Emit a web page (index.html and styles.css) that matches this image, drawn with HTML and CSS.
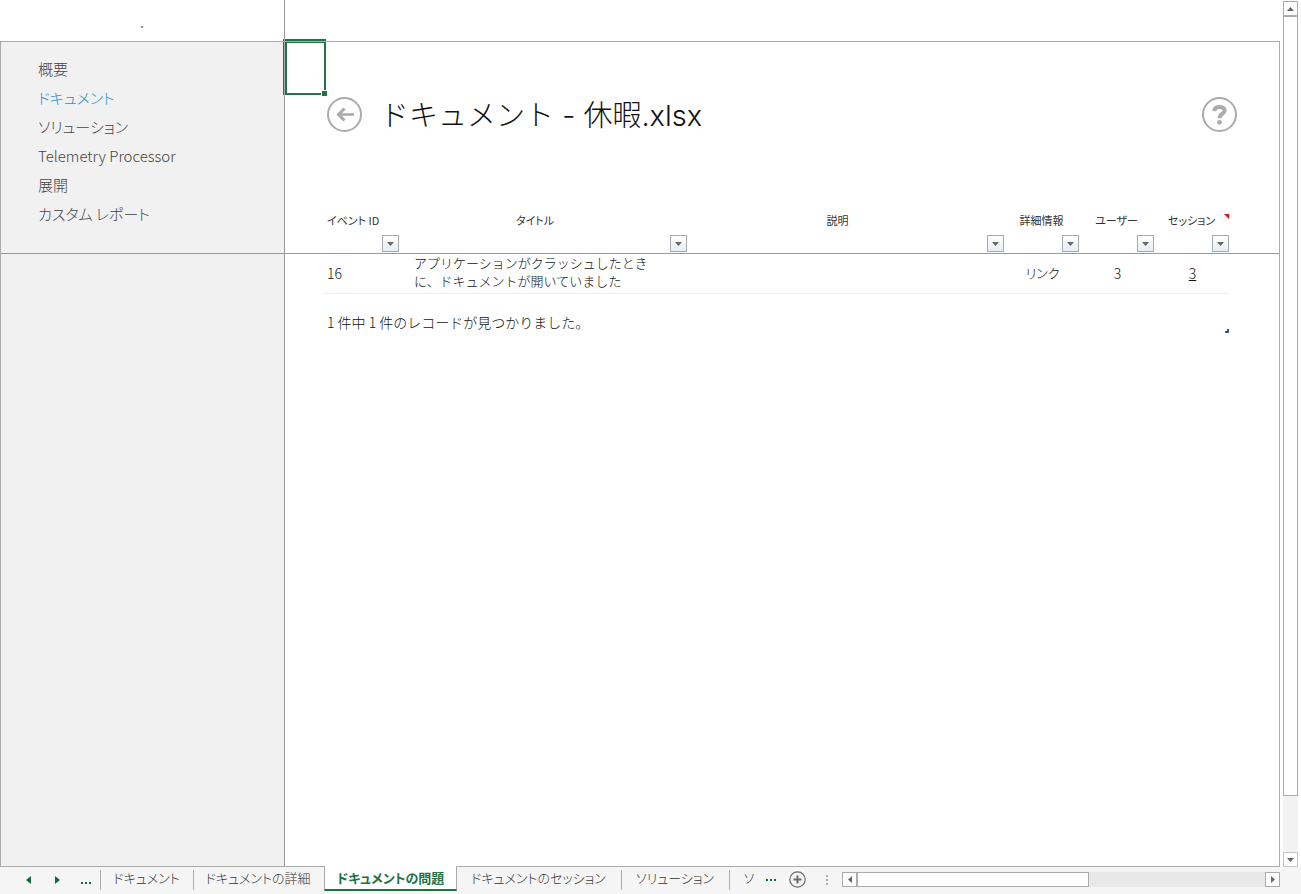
FILE: index.html
```html
<!DOCTYPE html>
<html lang="ja">
<head>
<meta charset="utf-8">
<title>ドキュメント - 休暇.xlsx</title>
<link rel="stylesheet" href="styles.css">
</head>
<body>
<div class="app">
  <div class="work">
    <div class="sheet">
      <div class="sheet-top"><div class="sheet-corner">.</div></div>
      <div class="panes">
        <aside class="sidebar">
          <nav class="nav">
            <a class="nav-link" href="#overview">概要</a>
            <a class="nav-link nav-current" href="#documents">ドキュメント</a>
            <a class="nav-link" href="#solutions">ソリューション</a>
            <a class="nav-link" href="#processor">Telemetry Processor</a>
            <a class="nav-link" href="#deploy">展開</a>
            <a class="nav-link" href="#reports">カスタム レポート</a>
          </nav>
        </aside>
        <main class="main">
          <svg class="selection" width="45" height="58" viewBox="0 0 45 58" shape-rendering="crispEdges" aria-hidden="true">
            <path fill="#217346" d="M0 0h43v51h-2V4H4v50h34v2H0z"/>
            <path fill="#217346" d="M39 52h5v5h-5z"/>
            <path fill="#ababab" d="M0 2h43v1H0zM1 0h1v56H1z"/>
          </svg>
          <header class="title-bar">
            <button class="round" type="button" aria-label="戻る">
              <svg width="35" height="35" viewBox="0 0 35 35" fill="none" stroke="#ababab">
                <circle cx="17.500" cy="17.500" r="16.500" stroke-width="2"/>
                <path d="M11 17.500h16" stroke-width="2.600"/>
                <path d="M17.500 11.500l-6 6 6 6" stroke-width="3"/>
              </svg>
            </button>
            <h1 class="title">ドキュメント - 休暇.xlsx</h1>
            <button class="round" type="button" aria-label="ヘルプ">
              <svg width="35" height="35" viewBox="0 0 35 35" fill="none" stroke="#ababab">
                <circle cx="17.500" cy="17.500" r="16.500" stroke-width="2"/>
                <path d="M12.300 14.200c.2-3 2.200-4.300 5-4.300 3.200 0 5.300 1.300 5.300 3.600 0 3.600-5 3.300-5 7.700" stroke-width="4"/>
                <circle cx="17.500" cy="25.300" r="2.400" fill="#ababab" stroke="none"/>
              </svg>
            </button>
          </header>
          <table class="grid">
            <colgroup>
              <col class="c-lead"><col class="c-id"><col class="c-name"><col class="c-desc">
              <col class="c-small"><col class="c-small"><col class="c-small"><col class="c-tail">
            </colgroup>
            <thead>
              <tr>
                <td></td>
                <th class="left" scope="col">イベント ID<button class="filter" type="button" aria-label="イベント ID のフィルター"><svg width="7" height="4" viewBox="0 0 7 4"><path d="M0 0h7L3.500 4z"/></svg></button></th>
                <th class="wide" scope="col">タイトル<button class="filter" type="button" aria-label="タイトルのフィルター"><svg width="7" height="4" viewBox="0 0 7 4"><path d="M0 0h7L3.500 4z"/></svg></button></th>
                <th class="wide" scope="col">説明<button class="filter" type="button" aria-label="説明のフィルター"><svg width="7" height="4" viewBox="0 0 7 4"><path d="M0 0h7L3.500 4z"/></svg></button></th>
                <th scope="col">詳細情報<button class="filter" type="button" aria-label="詳細情報のフィルター"><svg width="7" height="4" viewBox="0 0 7 4"><path d="M0 0h7L3.500 4z"/></svg></button></th>
                <th scope="col">ユーザー<button class="filter" type="button" aria-label="ユーザーのフィルター"><svg width="7" height="4" viewBox="0 0 7 4"><path d="M0 0h7L3.500 4z"/></svg></button></th>
                <th class="noted" scope="col">セッション<button class="filter" type="button" aria-label="セッションのフィルター"><svg width="7" height="4" viewBox="0 0 7 4"><path d="M0 0h7L3.500 4z"/></svg></button></th>
                <td></td>
              </tr>
            </thead>
            <tbody>
              <tr>
                <td></td>
                <td class="cell num left">16</td>
                <td class="cell name">アプリケーションがクラッシュしたときに、ドキュメントが開いていました</td>
                <td class="cell"></td>
                <td class="cell"><a class="plain" href="#link">リンク</a></td>
                <td class="cell num">3</td>
                <td class="cell num"><a class="count" href="#sessions">3</a></td>
                <td></td>
              </tr>
            </tbody>
            <tfoot>
              <tr>
                <td></td>
                <td class="summary" colspan="6">1 件中 1 件のレコードが見つかりました。</td>
                <td></td>
              </tr>
            </tfoot>
          </table>
        </main>
      </div>
    </div>
    <div class="vscroll">
      <button class="arrow" type="button" aria-label="上へ"><svg width="7" height="4" viewBox="0 0 7 4"><path d="M0 4h7L3.500 0z"/></svg></button>
      <div class="vthumb"></div>
      <div class="vtrack"></div>
      <button class="arrow arrow-pale" type="button" aria-label="下へ"><svg width="7" height="4" viewBox="0 0 7 4"><path d="M0 0h7L3.500 4z"/></svg></button>
    </div>
  </div>
  <footer class="bar">
    <div class="tab-nav">
      <button class="ghost" type="button" aria-label="前のシート"><svg width="5" height="8" viewBox="0 0 5 8"><path d="M5 0v8L0 4z"/></svg></button>
      <button class="ghost" type="button" aria-label="次のシート"><svg width="5" height="8" viewBox="0 0 5 8"><path d="M0 0v8l5-4z"/></svg></button>
      <button class="ghost ghost-low" type="button" aria-label="シート一覧"><svg width="10" height="2" viewBox="0 0 10 2"><path d="M0 0h2v2H0zM4 0h2v2H4zM8 0h2v2H8z"/></svg></button>
    </div>
    <button class="tab tab-s" type="button">ドキュメント</button>
    <button class="tab tab-m" type="button">ドキュメントの詳細</button>
    <button class="tab tab-m tab-on" type="button">ドキュメントの問題</button>
    <button class="tab tab-l" type="button">ドキュメントのセッション</button>
    <button class="tab tab-r" type="button">ソリューション</button>
    <button class="tab tab-cut" type="button">ソ</button>
    <button class="ghost more" type="button" aria-label="その他のシート"><svg width="10" height="2" viewBox="0 0 10 2"><path d="M0 0h2v2H0zM4 0h2v2H4zM8 0h2v2H8z"/></svg></button>
    <button class="ghost add" type="button" aria-label="新しいシート">
      <svg width="17" height="17" viewBox="0 0 17 17" fill="none" stroke="#6a6a6a"><circle cx="8.500" cy="8.500" r="7.700" stroke-width="1.200"/><path d="M8.500 4.500v8M4.500 8.500h8" stroke-width="2"/></svg>
    </button>
    <svg class="grip" width="2" height="10" viewBox="0 0 2 10"><path fill="#ababab" d="M0 0h2v2H0zM0 4h2v2H0zM0 8h2v2H0z"/></svg>
    <div class="hscroll">
      <button class="arrow" type="button" aria-label="左へ"><svg width="4" height="7" viewBox="0 0 4 7"><path d="M4 0v7L0 3.500z"/></svg></button>
      <div class="hthumb"></div>
      <div class="htrack"></div>
      <button class="arrow" type="button" aria-label="右へ"><svg width="4" height="7" viewBox="0 0 4 7"><path d="M0 0v7l4-3.500z"/></svg></button>
    </div>
  </footer>
</div>
</body>
</html>
```
FILE: styles.css
```css
* { box-sizing: border-box; }
body {
  margin: 0;
  background: #fff;
  color: #111;
  font-family: "Noto Sans CJK JP", sans-serif;
  font-size: 13px;
  font-weight: 300;
}
button {
  margin: 0;
  padding: 0;
  border: 0;
  background: none;
  color: inherit;
  font: inherit;
}
svg { display: block; }
a { color: inherit; text-decoration: none; }

.app { display: flex; flex-direction: column; min-height: 100vh; }
.work { display: flex; flex: 1; }
.sheet { display: flex; flex: 1; flex-direction: column; border-bottom: 1px solid #ababab; }
.sheet-top { display: flex; height: 42px; border-bottom: 1px solid #ababab; }
.sheet-corner {
  width: 285px;
  padding-top: 15px;
  border-right: 1px solid #999;
  color: #777;
  font-size: 11px;
  font-weight: 700;
  line-height: 16px;
  text-align: center;
}
.panes { display: flex; flex: 1; }

.sidebar {
  width: 285px;
  border-left: 1px solid #ababab;
  border-right: 1px solid #999;
  background: #f1f1f1;
}
.nav {
  display: flex;
  flex-direction: column;
  height: 212px;
  padding: 12px 0 0 37px;
  border-bottom: 1px solid #999;
  color: #444;
  font-size: 15px;
  line-height: 29px;
  font-feature-settings: "palt";
}
.nav-current { color: #2a8dd0; }

.main { position: relative; flex: 1; border-right: 1px solid #ababab; }
.selection { position: absolute; left: -2px; top: -3px; }
.title-bar {
  display: flex;
  align-items: center;
  gap: 18px;
  height: 169px;
  padding: 0 42px 25px;
}
.title {
  flex: 1;
  margin: 0;
  padding-top: 4px;
  color: #111;
  font-family: Inter, "Noto Sans CJK JP", sans-serif;
  font-size: 29px;
  font-weight: 300;
  line-height: 40px;
}

.grid { width: 100%; border-collapse: separate; border-spacing: 0; table-layout: fixed; }
.grid td, .grid th { padding: 0; }
.c-lead { width: 39px; }
.c-id { width: 75px; }
.c-name { width: 288px; }
.c-small { width: 75px; }
.c-tail { width: 50px; }
.grid thead td, .grid th { border-bottom: 1px solid #999; }
.grid th {
  height: 43px;
  padding-top: 1px;
  font-size: 11px;
  font-weight: 400;
  line-height: 17px;
  font-feature-settings: "palt";
  color: #333;
  text-align: center;
  vertical-align: top;
}
.grid th.left, .grid td.left { padding-left: 3px; text-align: left; }
.grid th.wide { text-indent: -16px; }
.noted { position: relative; }
.noted::after {
  content: "";
  position: absolute;
  top: 3px;
  right: 0;
  border-top: 5px solid #f00;
  border-left: 5px solid transparent;
}
.filter {
  display: flex;
  align-items: center;
  justify-content: center;
  width: 17px;
  height: 17px;
  margin: 6px 0 1px auto;
  border: 1px solid #a3aab4;
  background: linear-gradient(#fff, #e9edf4);
  fill: #666;
}
.grid .cell {
  height: 40px;
  padding: 0 0 2px 2px;
  border-bottom: 1px solid #ececec;
  line-height: 18px;
  text-align: center;
}
.num { font-size: 14px; }
.plain { font-feature-settings: "palt"; }
.grid td.left.cell { padding-left: 3px; text-align: left; }
.grid .cell.name { padding: 0 15px 3px 15px; text-align: left; }
.count { text-decoration: underline; }
.grid .summary {
  position: relative;
  height: 39px;
  padding: 18px 0 1px 3px;
  font-size: 14px;
  line-height: 20px;
}
.summary::after {
  content: "";
  position: absolute;
  right: 0;
  bottom: 0;
  width: 4px;
  height: 4px;
  background: #3f51a3;
  clip-path: polygon(50% 0, 100% 0, 100% 100%, 0 100%, 0 50%, 50% 50%);
}

.arrow {
  display: flex;
  align-items: center;
  justify-content: center;
  width: 15px;
  height: 15px;
  border: 1px solid #ababab;
  background: #fff;
  fill: #666;
}
.arrow-pale { border-color: #c6c6c6; }
.vscroll { display: flex; flex-direction: column; margin: 1px 3px 0; }
.vthumb { flex: 780; border: 1px solid #ababab; background: #fff; }
.vtrack { flex: 56; background: #f2f2f2; }

.bar { display: flex; align-items: flex-start; height: 27px; background: #f5f5f5; color: #333; }
.tab-nav { display: flex; width: 101px; height: 24px; padding-left: 26px; gap: 24px; }
.ghost { display: flex; align-items: center; height: 25px; fill: #0e6b38; }
.ghost-low { padding-top: 7px; margin-left: -3px; }
.tab {
  position: relative;
  height: 24px;
  padding: 0 2px 2px 0;
  font-feature-settings: "palt";
  line-height: 22px;
  text-align: center;
  white-space: nowrap;
}
.tab::before {
  content: "";
  position: absolute;
  left: -1px;
  top: 3px;
  width: 1px;
  height: 20px;
  background: #ababab;
}
.tab-s { width: 93px; }
.tab-m { width: 130px; }
.tab-l { width: 165px; }
.tab-r { width: 108px; }
.tab-cut { width: 36px; padding-left: 4px; }
.tab.tab-on {
  width: 133px;
  height: 25px;
  margin-top: -1px;
  padding: 0;
  border: solid #ababab;
  border-width: 0 1px;
  border-bottom: 2px solid #217346;
  background: #fff;
  color: #217346;
  font-weight: 700;
}
.tab-on::before, .tab-on + .tab::before { display: none; }
.more { width: 23px; }
.add { width: 37px; }
.grip { margin: 8px 14px 0 0; }
.hscroll { display: flex; flex: 1; margin: 5px 21px 0 0; }
.hthumb { flex: 232; border: 1px solid #ababab; background: #fff; }
.htrack { flex: 177; background: #e8e8e8; }
```
